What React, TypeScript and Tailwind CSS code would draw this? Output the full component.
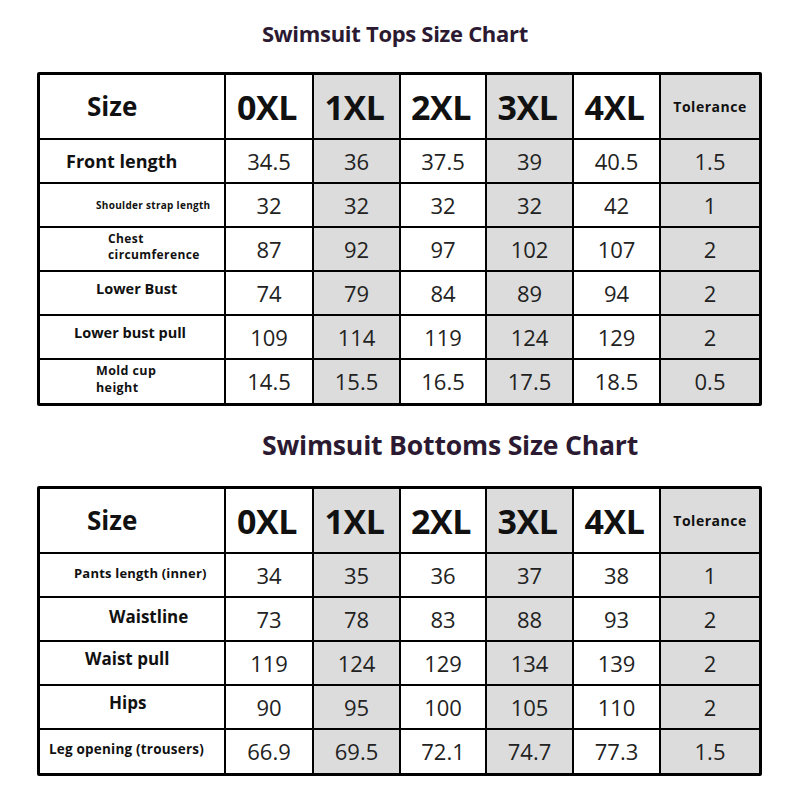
import React from "react";

type Label = { lines: string[]; cls: string };

const sizes = ["0XL", "1XL", "2XL", "3XL", "4XL"];

const tops: { label: Label; vals: string[] }[] = [
  { label: { lines: ["Front length"], cls: "pl-[26px] text-[18px]" }, vals: ["34.5", "36", "37.5", "39", "40.5", "1.5"] },
  { label: { lines: ["Shoulder strap length"], cls: "pl-[56px] text-[10px] tracking-[0.3px]" }, vals: ["32", "32", "32", "32", "42", "1"] },
  { label: { lines: ["Chest", "circumference"], cls: "pl-[68px] text-[12px] leading-[16px] pb-[5px] tracking-[0.4px]" }, vals: ["87", "92", "97", "102", "107", "2"] },
  { label: { lines: ["Lower Bust"], cls: "pl-[56px] text-[14.5px] pb-[8px]" }, vals: ["74", "79", "84", "89", "94", "2"] },
  { label: { lines: ["Lower bust pull"], cls: "pl-[34px] text-[14.5px] pb-[8px]" }, vals: ["109", "114", "119", "124", "129", "2"] },
  { label: { lines: ["Mold cup", "height"], cls: "pl-[56px] text-[12.5px] leading-[17px] pb-[5px] tracking-[0.4px]" }, vals: ["14.5", "15.5", "16.5", "17.5", "18.5", "0.5"] },
];

const bottoms: { label: Label; vals: string[] }[] = [
  { label: { lines: ["Pants length (inner)"], cls: "pl-[34px] text-[13px] pb-[2px] tracking-[0.2px]" }, vals: ["34", "35", "36", "37", "38", "1"] },
  { label: { lines: ["Waistline"], cls: "pl-[69px] text-[17px] pb-[5px]" }, vals: ["73", "78", "83", "88", "93", "2"] },
  { label: { lines: ["Waist pull"], cls: "pl-[45px] text-[17px] pb-[8px]" }, vals: ["119", "124", "129", "134", "139", "2"] },
  { label: { lines: ["Hips"], cls: "pl-[69px] text-[17px] pb-[8px]" }, vals: ["90", "95", "100", "105", "110", "2"] },
  { label: { lines: ["Leg opening (trousers)"], cls: "pl-[9px] text-[13.5px] pb-[5px] tracking-[0.2px]" }, vals: ["66.9", "69.5", "72.1", "74.7", "77.3", "1.5"] },
];

const gray = [false, true, false, true, false, true];

function Table({ rows }: { rows: { label: Label; vals: string[] }[] }) {
  const cols = "grid grid-cols-[186px_88px_87px_86px_87px_87px_1fr]";
  return (
    <div className="ml-[37px] w-[725px] border-[3px] border-black rounded-[2px] bg-white">
      <div className={`${cols} h-[65px] border-b-2 border-black`}>
        <div className="border-r-2 border-black flex items-center pl-[47px]">
          <span className="font-bold text-[26px] text-[#111]">Size</span>
        </div>
        {sizes.map((s, i) => (
          <div
            key={s}
            className={`border-r-2 border-black flex items-center justify-center ${gray[i] ? "bg-[#dcdcdc]" : "bg-white"}`}
          >
            <span className="font-bold text-[34px] tracking-[-0.5px] text-[#111] pt-[2px] pr-[4px]">{s}</span>
          </div>
        ))}
        <div className="flex items-center justify-center bg-[#dcdcdc]">
          <span className="font-bold text-[14px] tracking-[0.5px] text-[#111]">Tolerance</span>
        </div>
      </div>
      {rows.map((r, ri) => (
        <div
          key={ri}
          className={`${cols} ${ri === rows.length - 1 ? "h-[43px]" : "h-[44px] border-b-2 border-black"}`}
        >
          <div className={`border-r-2 border-black flex items-center font-bold text-[#111] ${r.label.cls}`}>
            <div className="flex flex-col">
              {r.label.lines.map((l) => (
                <span key={l} className="whitespace-nowrap">{l}</span>
              ))}
            </div>
          </div>
          {r.vals.map((v, i) => (
            <div
              key={i}
              className={`${i < 5 ? "border-r-2 border-black" : ""} flex items-center justify-center ${gray[i] ? "bg-[#dcdcdc]" : "bg-white"}`}
            >
              <span className="text-[22px] text-[#222]">{v}</span>
            </div>
          ))}
        </div>
      ))}
    </div>
  );
}

export default function App() {
  return (
    <div
      className="w-[800px] h-[800px] bg-white flex flex-col"
      style={{ fontFamily: '"Open Sans", "Noto Sans", sans-serif' }}
    >
      <div className="h-[66px] flex items-center pl-[262px]">
        <h1 className="font-bold text-[22px] text-[#2b1a31] tracking-[-0.3px]">Swimsuit Tops Size Chart</h1>
      </div>
      <div className="mt-[6px]">
        <Table rows={tops} />
      </div>
      <div className="h-[80px] flex items-center pl-[262px]">
        <h2 className="font-bold text-[26.6px] text-[#2b1a31] tracking-[-0.2px]">Swimsuit Bottoms Size Chart</h2>
      </div>
      <div>
        <Table rows={bottoms} />
      </div>
    </div>
  );
}
